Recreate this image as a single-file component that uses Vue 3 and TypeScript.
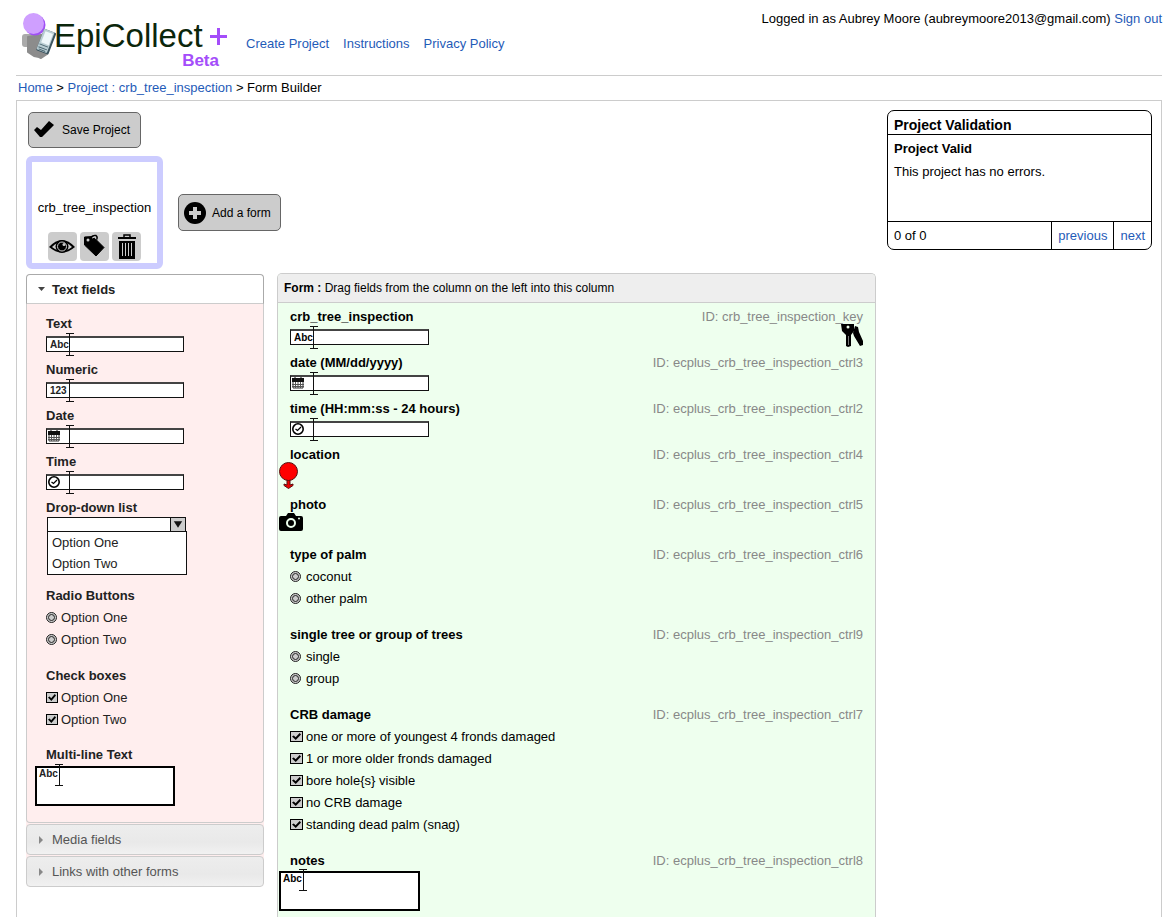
<script setup lang="ts">
type Kind = 'text' | 'numeric' | 'date' | 'time' | 'select' | 'radio' | 'check' | 'multi' | 'location' | 'photo'

interface Field {
  label: string
  kind: Kind
  id: string
  options?: string[]
  isKey?: boolean
}

const palette: Field[] = [
  { label: 'Text', kind: 'text', id: 'tpl_text' },
  { label: 'Numeric', kind: 'numeric', id: 'tpl_numeric' },
  { label: 'Date', kind: 'date', id: 'tpl_date' },
  { label: 'Time', kind: 'time', id: 'tpl_time' },
  { label: 'Drop-down list', kind: 'select', id: 'tpl_select', options: ['Option One', 'Option Two'] },
  { label: 'Radio Buttons', kind: 'radio', id: 'tpl_radio', options: ['Option One', 'Option Two'] },
  { label: 'Check boxes', kind: 'check', id: 'tpl_check', options: ['Option One', 'Option Two'] },
  { label: 'Multi-line Text', kind: 'multi', id: 'tpl_multi' },
]

const formFields: Field[] = [
  { label: 'crb_tree_inspection', kind: 'text', id: 'crb_tree_inspection_key', isKey: true },
  { label: 'date (MM/dd/yyyy)', kind: 'date', id: 'ecplus_crb_tree_inspection_ctrl3' },
  { label: 'time (HH:mm:ss - 24 hours)', kind: 'time', id: 'ecplus_crb_tree_inspection_ctrl2' },
  { label: 'location', kind: 'location', id: 'ecplus_crb_tree_inspection_ctrl4' },
  { label: 'photo', kind: 'photo', id: 'ecplus_crb_tree_inspection_ctrl5' },
  { label: 'type of palm', kind: 'radio', id: 'ecplus_crb_tree_inspection_ctrl6', options: ['coconut', 'other palm'] },
  { label: 'single tree or group of trees', kind: 'radio', id: 'ecplus_crb_tree_inspection_ctrl9', options: ['single', 'group'] },
  {
    label: 'CRB damage',
    kind: 'check',
    id: 'ecplus_crb_tree_inspection_ctrl7',
    options: [
      'one or more of youngest 4 fronds damaged',
      '1 or more older fronds damaged',
      'bore hole{s} visible',
      'no CRB damage',
      'standing dead palm (snag)',
    ],
  },
  { label: 'notes', kind: 'multi', id: 'ecplus_crb_tree_inspection_ctrl8' },
]

const columns = [
  { name: 'palette', fields: palette },
  { name: 'form', fields: formFields },
]

const boxKinds: Kind[] = ['text', 'numeric', 'date', 'time']
const sample = (kind: Kind): string => (kind === 'text' ? 'Abc' : kind === 'numeric' ? '123' : '')
</script>

<template>
  <div class="page">
    <header class="top">
      <div class="logo">
        <svg class="logo-mark" viewBox="0 0 34 50" width="34" height="50" aria-hidden="true">
          <rect x="0" y="22" width="13" height="13" rx="3" fill="#aaa" />
          <path d="M6 25 L25 22 L25 42 L19 46 L17 45 L12 44 L6 40 Z" fill="#8c8c8c" stroke="#8c8c8c" stroke-width="2" stroke-linejoin="round" />
          <circle cx="13" cy="13" r="10.500" fill="#a050f5" />
          <circle cx="11.500" cy="11.500" r="10.500" fill="#cf9fff" />
          <g transform="rotate(21 24 29)">
            <rect x="18" y="18" width="13" height="23" rx="1" fill="#3c5560" />
            <rect x="18" y="18" width="11" height="22" rx="1" fill="#b9cdd3" />
            <rect x="20" y="20" width="8" height="12" fill="#eef7fa" />
            <path d="M19 34h9M19 37h9M20 39h7" stroke="#4b6671" stroke-width="1" />
          </g>
        </svg>
        <div class="logo-text">
          <div class="name">EpiCollect<svg class="plus" viewBox="0 0 17 17" width="17" height="17" aria-label="plus"><path d="M8.500 0v17M0 8.500h17" stroke="#a44dfa" stroke-width="3" /></svg></div>
          <div class="beta">Beta</div>
        </div>
      </div>
      <nav class="menu">
        <a href="#create">Create Project</a>
        <a href="#instructions">Instructions</a>
        <a href="#privacy">Privacy Policy</a>
      </nav>
      <div class="account">Logged in as Aubrey Moore (aubreymoore2013@gmail.com) <a href="#signout">Sign out</a></div>
    </header>

    <div class="crumbs">
      <a href="#home">Home</a> &gt; <a href="#project">Project : crb_tree_inspection</a> &gt; Form Builder
    </div>

    <main class="main">
      <div class="work">
        <button type="button" class="btn save">
          <svg viewBox="0 0 22 18" width="22" height="18" aria-hidden="true"><path d="M1 9 L4 6 L8 9 L16 0 L21 4 L9 16 L7 16 Z" fill="#000" /></svg>
          Save Project
        </button>

        <div class="forms">
          <div class="card">
            <span class="card-name">crb_tree_inspection</span>
            <div class="tools">
              <button type="button" aria-label="Preview form">
                <svg viewBox="0 0 29 29" width="29" height="29">
                  <path d="M1 15 Q14 1 27 15 Q14 26 1 15 Z" fill="#000" />
                  <path d="M4 15 Q14 5 24 15 Q14 23 4 15 Z" fill="#ccc" />
                  <circle cx="14" cy="14.500" r="6.500" fill="#000" />
                  <circle cx="14" cy="14.500" r="4.500" fill="none" stroke="#ccc" stroke-width="1" />
                  <circle cx="16" cy="12.500" r="1.500" fill="#ccc" />
                </svg>
              </button>
              <button type="button" aria-label="Rename form">
                <svg viewBox="0 0 29 29" width="29" height="29">
                  <path d="M4.500 5 L13 4.500 L24 15.500 L16 24 L4.500 13 Z" fill="#000" stroke="#000" stroke-linejoin="round" />
                  <circle cx="8" cy="8" r="1.500" fill="#ccc" />
                  <path d="M11 5 Q13 3 16 3.500 Q18 5 16.500 7.500" fill="none" stroke="#000" stroke-width="1.500" />
                  <path d="M12 6 L15 5 L16 7" fill="none" stroke="#ccc" />
                </svg>
              </button>
              <button type="button" aria-label="Delete form">
                <svg viewBox="0 0 29 29" width="29" height="29">
                  <path d="M12 5V3h6v2" fill="none" stroke="#000" stroke-width="1.500" />
                  <path d="M6 5h18v2H6zM7 9h16v18H7z" fill="#000" />
                  <path d="M10.500 11v13M13.500 11v13M16.500 11v13M19.500 11v13" stroke="#ccc" stroke-width="1" />
                </svg>
              </button>
            </div>
          </div>
          <button type="button" class="btn add">
            <svg viewBox="0 0 22 22" width="22" height="22" aria-hidden="true">
              <circle cx="11" cy="11" r="11" fill="#000" />
              <path d="M11 5v12M5 11h12" stroke="#ccc" stroke-width="4" />
            </svg>
            Add a form
          </button>
        </div>

        <div class="builder">
          <section v-for="col in columns" :key="col.name" :class="col.name">
            <button v-if="col.name === 'palette'" type="button" class="fold open">
              <svg viewBox="0 0 8 8" width="8" height="8" aria-hidden="true"><path d="M1 2h7L4.500 6z" fill="#444" /></svg>
              Text fields
            </button>
            <div v-else class="form-head"><b>Form :</b> Drag fields from the column on the left into this column</div>

            <div class="body">
              <div v-for="f in col.fields" :key="f.id" class="field" :class="'k-' + f.kind">
                <div class="content">
                  <label class="title" :for="f.id">{{ f.label }}</label>

                  <div v-if="boxKinds.includes(f.kind)" class="box">
                    <input :id="f.id" type="text" :value="sample(f.kind)" readonly />
                    <svg v-if="f.kind === 'date'" class="glyph" viewBox="0 0 12 12" width="12" height="12" aria-hidden="true">
                      <path d="M1 2h10v9H1z" fill="#fff" stroke="#333" />
                      <path d="M0 1h12v4H0z" fill="#111" />
                      <path d="M3 0v2M9 0v2" stroke="#111" />
                      <path d="M0 7.500h12M0 9.500h12M3.500 5v6M6 5v6M8.500 5v6" stroke="#555" stroke-width="1" />
                    </svg>
                    <svg v-if="f.kind === 'time'" class="glyph" viewBox="0 0 12 12" width="12" height="12" aria-hidden="true">
                      <circle cx="6" cy="6" r="5.200" fill="#fff" stroke="#000" stroke-width="1.600" />
                      <path d="M3.500 6L5.500 7.500L9 4" fill="none" stroke="#000" stroke-width="1.300" />
                    </svg>
                    <svg class="caret" viewBox="0 0 8 23" width="8" height="23" aria-hidden="true"><path d="M0 .5h8M0 22.500h8M3.500 0v23" stroke="#111" /></svg>
                  </div>

                  <div v-else-if="f.kind === 'select'" class="drop">
                    <div class="drop-box">
                      <select :id="f.id"><option value=""></option></select>
                      <svg class="arrow" viewBox="0 0 15 13" width="15" height="13" aria-hidden="true"><path d="M3 3h9l-4.500 7z" fill="#111" /></svg>
                    </div>
                    <ul><li v-for="o in f.options" :key="o">{{ o }}</li></ul>
                  </div>

                  <div v-else-if="f.kind === 'radio' || f.kind === 'check'" class="options">
                    <label v-for="o in f.options" :key="o" class="option">
                      <span class="slot">
                        <input v-if="f.kind === 'radio'" type="radio" :name="f.id" :value="o" />
                        <input v-else type="checkbox" checked />
                      </span>
                      {{ o }}
                    </label>
                  </div>

                  <div v-else-if="f.kind === 'multi'" class="multi">
                    <textarea :id="f.id" readonly value="Abc"></textarea>
                    <svg class="caret" viewBox="0 0 8 22" width="8" height="22" aria-hidden="true"><path d="M0 .5h8M0 21.500h8M4.500 0v22" stroke="#111" /></svg>
                  </div>

                  <svg v-else-if="f.kind === 'location'" class="pic" viewBox="0 0 20 27" width="20" height="27" aria-hidden="true">
                    <path d="M8 17h3v6l3-1v1.500l-4.500 3l-4.500-3V22l3 1z" fill="#e00" stroke="#5a1010" />
                    <circle cx="9.500" cy="9.500" r="9" fill="#f00" stroke="#5a1010" />
                  </svg>

                  <svg v-else class="pic" viewBox="0 0 24 20" width="24" height="20" aria-hidden="true">
                    <path d="M2 4h5l2-3h6l2 3h5q2 0 2 2v11q0 2-2 2H2q-2 0-2-2V6q0-2 2-2z" fill="#000" />
                    <circle cx="12" cy="11" r="4" fill="#000" stroke="#efe" stroke-width="2" />
                    <circle cx="20" cy="6.500" r="1" fill="#efe" />
                  </svg>
                </div>

                <div v-if="col.name === 'form'" class="ident">
                  ID: {{ f.id }}
                  <svg v-if="f.isKey" class="keys" viewBox="0 0 22 24" width="22" height="24" aria-label="Key field">
                    <path d="M0 1h13v7l-3 4v11l-3 1-2-1V12L1 8z" fill="#000" />
                    <circle cx="7" cy="4" r="1.500" fill="#efe" />
                    <path d="M7.500 13v9" stroke="#777" />
                    <path d="M14 3l3 1 1 5 4 9v4l-3 1-6-10-1-3z" fill="#000" />
                  </svg>
                </div>
              </div>
            </div>

            <template v-if="col.name === 'palette'">
              <button v-for="t in ['Media fields', 'Links with other forms']" :key="t" type="button" class="fold">
                <svg viewBox="0 0 8 8" width="8" height="8" aria-hidden="true"><path d="M2 0v8L6 4z" fill="#888" /></svg>
                {{ t }}
              </button>
            </template>
          </section>
        </div>
      </div>

      <aside class="validation">
        <h2>Project Validation</h2>
        <div class="report">
          <h3>Project Valid</h3>
          <p>This project has no errors.</p>
        </div>
        <div class="pager">
          <span>0 of 0</span>
          <a href="#previous">previous</a>
          <a href="#next">next</a>
        </div>
      </aside>
    </main>
  </div>
</template>

<style>
body {
  margin: 0;
  background: #fff;
}
</style>

<style scoped>
* {
  box-sizing: border-box;
}
.page {
  display: flex;
  flex-direction: column;
  min-height: 100vh;
  padding: 0 10px 0 16px;
  font: 13px/22px "Liberation Sans", Arial, sans-serif;
  color: #000;
}
button,
input,
select,
textarea {
  margin: 0;
  font-family: inherit;
  color: inherit;
}
a {
  color: #1f5bb8;
  text-decoration: none;
}
.top {
  display: flex;
  border-bottom: 1px solid #ccc;
  height: 76px;
}
.logo {
  display: flex;
  width: 230px;
  padding: 12px 0 0 6px;
}
.logo-mark {
  flex: none;
}
.logo-text {
  width: 174px;
  margin-left: -2px;
}
.name {
  display: flex;
  align-items: center;
  gap: 7px;
  font-size: 33px;
  line-height: 30px;
  height: 39px;
  padding-top: 9px;
  color: #0b260b;
}
.plus {
  flex: none;
}
.beta {
  padding-right: 9px;
  text-align: right;
  font-size: 17px;
  font-weight: bold;
  line-height: 20px;
  color: #a44dfa;
}
.menu {
  display: flex;
  gap: 14px;
  padding-top: 33px;
}
.account {
  margin-left: auto;
  padding-top: 8px;
}
.crumbs {
  height: 24px;
  padding-left: 2px;
  line-height: 23px;
}
.main {
  flex: 1;
  display: flex;
  align-items: flex-start;
  gap: 11px;
  padding: 9px 9px 0;
  border: 1px solid #ccc;
  border-bottom: 0;
}
.work {
  flex: 1;
  align-self: stretch;
  display: flex;
  flex-direction: column;
  align-items: flex-start;
}
.btn {
  display: flex;
  align-items: center;
  border: 1px solid #666;
  border-radius: 5px;
  background: #ccc;
  font-size: 12px;
}
.save {
  margin: 2px 2px 8px;
  height: 36px;
  gap: 7px;
  padding: 0 10px 0 4px;
}
.add {
  height: 37px;
  gap: 6px;
  padding: 0 9px 0 5px;
}
.forms {
  display: flex;
  align-items: center;
  gap: 15px;
  margin-bottom: 4px;
}
.card {
  display: flex;
  flex-direction: column;
  align-items: center;
  justify-content: flex-end;
  width: 137px;
  height: 113px;
  padding-bottom: 2px;
  border: 6px solid #ccf;
  border-radius: 6px;
}
.card-name {
  margin-bottom: 13px;
}
.tools {
  display: flex;
  gap: 3px;
}
.tools button {
  width: 29px;
  height: 29px;
  padding: 0;
  border: 0;
  border-radius: 4px;
  background: #ccc;
}
.tools svg {
  display: block;
}
.builder {
  flex: 1;
  align-self: stretch;
  display: grid;
  grid-template-columns: 238px 1fr;
  gap: 13px;
}
.palette {
  align-self: start;
  display: flex;
  flex-direction: column;
  gap: 1px;
  margin-top: 1px;
  border-radius: 5px;
  background: #fee;
  color: #222;
}
.fold {
  display: flex;
  align-items: center;
  gap: 7px;
  height: 31px;
  padding: 0 10px;
  border: 1px solid #ccc;
  border-radius: 4px;
  background: linear-gradient(#ededed, #e9e9e9 60%, #f1f1f1);
  color: #555;
  font-size: 13px;
}
.fold.open {
  height: 30px;
  margin-bottom: -1px;
  border-color: #aaa;
  border-bottom-color: #ccc;
  border-radius: 4px 4px 0 0;
  background: #fff;
  color: #222;
  font-weight: bold;
}
.palette .body {
  padding: 9px 8px 16px;
  border: 1px solid #ccc;
  border-top: 0;
  border-radius: 0 0 4px 4px;
}
.form {
  display: flex;
  flex-direction: column;
  border: 1px solid #ccc;
  border-bottom: 0;
  border-radius: 5px 5px 0 0;
  background: #efe;
  overflow: hidden;
}
.form-head {
  height: 29px;
  padding-left: 6px;
  border-bottom: 1px solid #ccc;
  background: #eee;
  font-size: 12px;
  line-height: 28px;
}
.form .body {
  padding: 3px 12px 0 1px;
}
.field {
  display: flex;
  justify-content: space-between;
  min-height: 46px;
}
.k-location,
.k-photo {
  height: 50px;
}
.k-radio,
.k-check {
  padding-bottom: 14px;
}
.palette .k-check {
  padding-bottom: 13px;
}
.k-select {
  height: 88px;
}
.title {
  display: block;
  padding-left: 11px;
  font-weight: bold;
}
.box {
  position: relative;
  width: 139px;
  height: 16px;
  margin: 1px 0 0 11px;
}
.palette .box {
  width: 138px;
}
.box input {
  display: block;
  width: 100%;
  height: 16px;
  padding: 0 3px;
  border: 1px solid #111;
  border-top: 2px solid #444;
  border-radius: 0;
  background: #fff;
  font-size: 10px;
  font-weight: bold;
  line-height: 12px;
}
.glyph {
  position: absolute;
  left: 2px;
  top: 2px;
}
.caret {
  position: absolute;
  left: 20px;
  top: -3px;
}
.drop {
  width: 140px;
  margin: -2px 0 0 12px;
}
.drop-box {
  display: flex;
  width: 139px;
  height: 15px;
  border: 1px solid #111;
  background: #fff;
}
.drop-box select {
  flex: 1;
  appearance: none;
  border: 0;
  padding: 0;
  background: #fff;
}
.arrow {
  border-left: 1px solid #111;
  background: #ccc;
}
.drop ul {
  margin: -1px 0 0;
  padding: 0 0 0 4px;
  height: 44px;
  border: 1px solid #111;
  background: #fff;
  line-height: 21px;
  list-style: none;
}
.option {
  display: flex;
  padding-left: 11px;
}
.slot {
  display: flex;
  align-items: center;
  width: 16px;
  height: 21px;
}
.palette .slot {
  width: 15px;
}
.option input {
  appearance: none;
  display: flex;
  background: #ccc;
  border: 1px solid #222;
}
.option input[type='radio'] {
  width: 11px;
  height: 11px;
  border-radius: 50%;
  align-items: center;
  justify-content: center;
}
.option input[type='radio']::before {
  content: '';
  width: 5px;
  height: 5px;
  border: 1px solid #222;
  border-radius: 50%;
}
.option input[type='checkbox'] {
  width: 13px;
  height: 11px;
  border-color: #000;
}
.palette .option input[type='checkbox'] {
  width: 12px;
}
.option input[type='checkbox']::before {
  content: '';
  flex: 1;
  margin: 1px;
  background: #000;
  clip-path: polygon(0 50%, 20% 35%, 40% 60%, 85% 0, 100% 20%, 42% 100%);
}
.multi {
  position: relative;
  width: 140px;
}
.form .multi {
  width: 141px;
  margin-top: -1px;
}
.multi textarea {
  display: block;
  width: 100%;
  height: 40px;
  padding: 0 2px;
  border: 2px solid #000;
  border-radius: 0;
  background: #fff;
  font-size: 10px;
  font-weight: bold;
  line-height: 12px;
  resize: none;
  overflow: hidden;
}
.multi .caret {
  top: -2px;
}
.pic {
  display: block;
  margin-top: -4px;
}
.ident {
  position: relative;
  color: #888;
}
.keys {
  position: absolute;
  right: 0;
  top: 17px;
}
.validation {
  width: 265px;
  border: 1px solid #000;
  border-radius: 7px;
}
.validation h2 {
  margin: 0;
  padding: 3px 6px 0;
  height: 24px;
  border-bottom: 1px solid #000;
  font-size: 14px;
  line-height: 22px;
}
.report {
  height: 86px;
  padding: 2px 6px;
}
.report h3,
.report p {
  margin: 0;
  font-size: 13px;
  line-height: 23px;
}
.pager {
  display: flex;
  border-top: 1px solid #000;
  line-height: 27px;
}
.pager span {
  flex: 1;
  padding-left: 6px;
}
.pager a {
  padding: 0 6px;
  border-left: 1px solid #000;
}
</style>
